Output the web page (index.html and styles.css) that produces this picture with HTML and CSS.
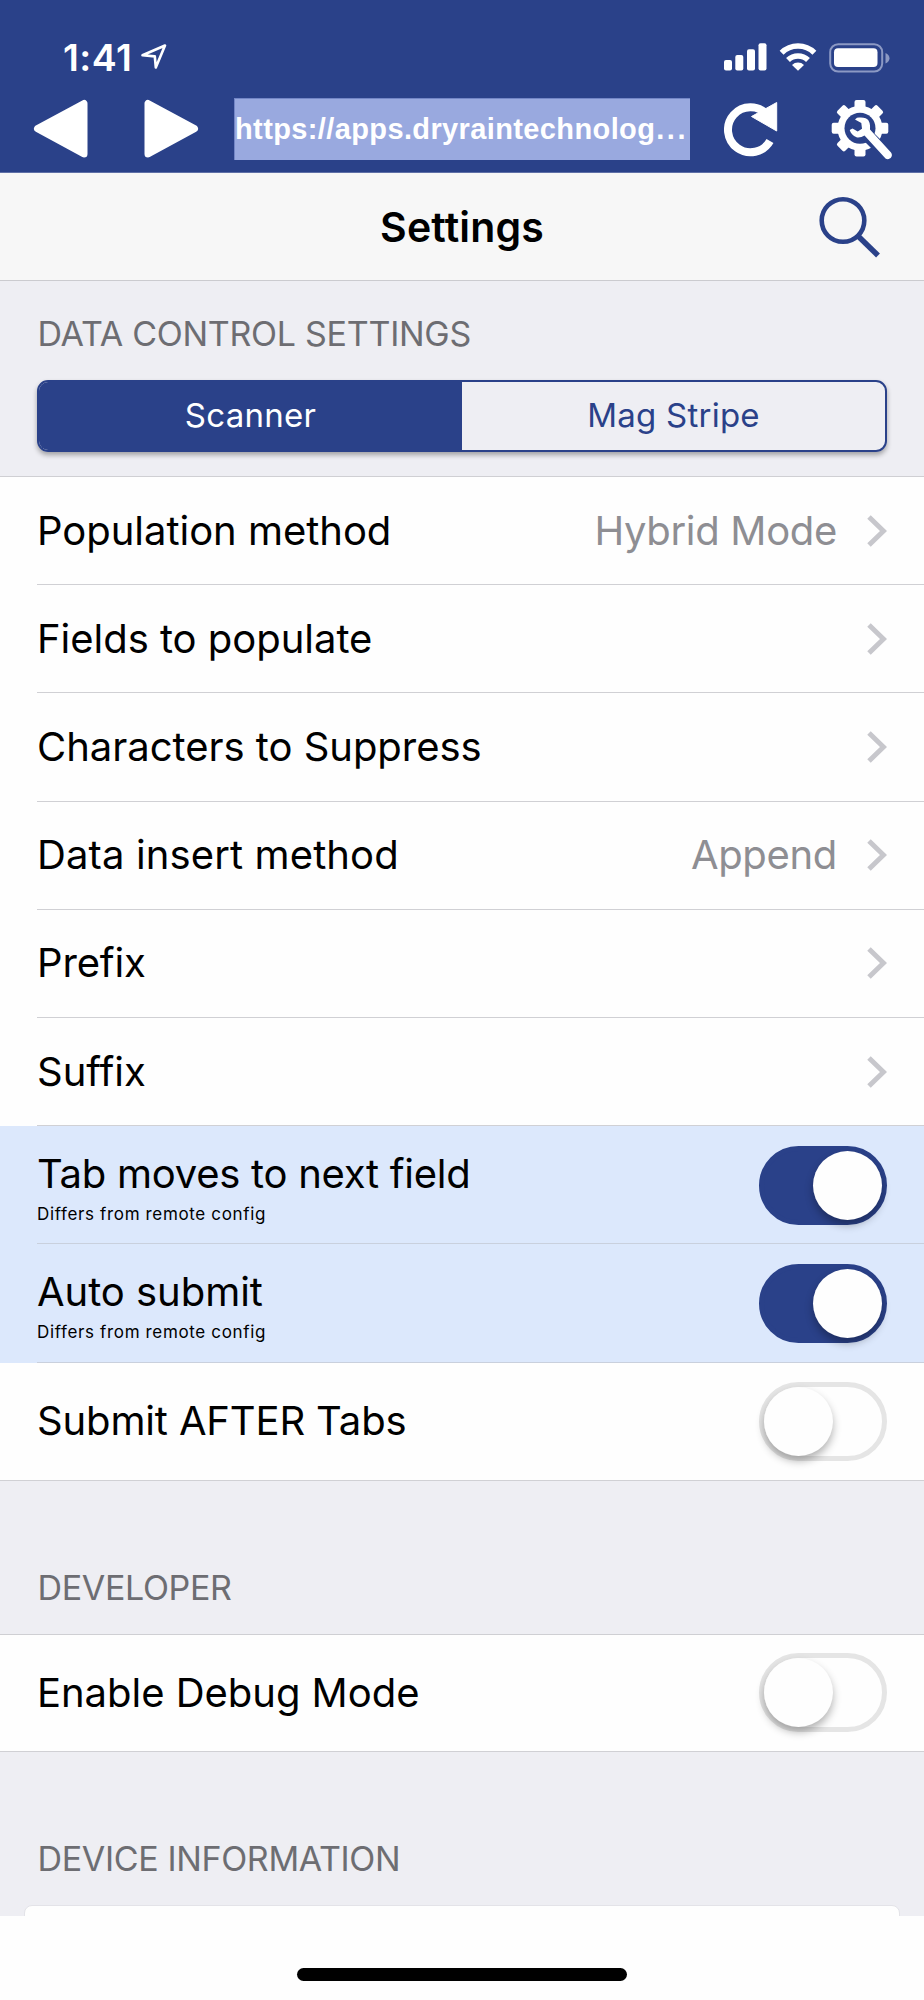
FILE: index.html
```html
<!DOCTYPE html>
<html lang="en">
<head>
<meta charset="utf-8">
<title>Settings</title>
<link rel="stylesheet" href="styles.css">
</head>
<body>
<div class="phone">
  <header class="browser">
    <div class="status">
      <div class="clock"><span class="time">1:41</span>
        <svg class="loc" width="26" height="26" viewBox="0 0 26 26"><path d="M1.5 11.3 24 1.5 14.8 23.5 13.8 12.4Z"/></svg>
      </div>
      <div class="signals">
        <svg width="43" height="28" viewBox="0 0 43 28" fill="#fff"><rect x="0" y="17" width="8" height="10.5" rx="2"/><rect x="11.3" y="12" width="8" height="15.5" rx="2"/><rect x="23" y="6.3" width="8" height="21.2" rx="2"/><rect x="34.5" y="0.3" width="8" height="27.2" rx="2"/></svg>
        <svg width="38" height="28" viewBox="0 0 38 28"><g fill="none" stroke="#fff" stroke-width="5.500"><path d="M2.6 9.8a23.2 23.2 0 0 1 32.8 0"/><path d="M9 17a14.3 14.3 0 0 1 20 0"/></g><path d="M19 27.8 13 22a8.5 8.5 0 0 1 12 0Z" fill="#fff"/></svg>
        <svg width="62" height="30" viewBox="0 0 62 30"><rect x="1.2" y="1.2" width="52" height="27.4" rx="8" fill="none" stroke="#8c99c4" stroke-width="2"/><rect x="5" y="5.3" width="43.500" height="18.8" rx="4" fill="#fff"/><path d="M56.5 10v10.500q4-2 4-5.250t-4-5.250Z" fill="#8c99c4"/></svg>
      </div>
    </div>
    <div class="toolbar">
      <svg class="tri" width="56" height="60" viewBox="0 0 56 60"><path d="M4.500 29.700 51 4.500v50.500Z"/></svg>
      <svg class="tri fwd" width="56" height="60" viewBox="0 0 56 60"><path d="M51.500 29.700 5 4.500v50.500Z"/></svg>
      <div class="url">https://apps.dryraintechnolog<span class="dots">...</span></div>
      <svg class="reload" width="56" height="56" viewBox="0 0 56 56"><path d="M43 13.500A22.500 22.500 0 1 0 46 40" fill="none" stroke="#fff" stroke-width="8"/><path d="M52.700 1.500v28.500L27.500 15.500Z" fill="#fff" stroke="#fff" stroke-linejoin="round"/></svg>
      <svg class="gear" width="64" height="64" viewBox="0 0 64 64">
        <g fill="#fff" transform="translate(29 29.300)"><rect x="-5.500" y="-28.300" width="11" height="56.600" rx="2"/><rect x="-5.500" y="-28.300" width="11" height="56.600" rx="2" transform="rotate(45)"/><rect x="-5.500" y="-28.300" width="11" height="56.600" rx="2" transform="rotate(90)"/><rect x="-5.500" y="-28.300" width="11" height="56.600" rx="2" transform="rotate(135)"/><circle r="22.500"/></g>
        <circle cx="29" cy="29.300" r="15.500" fill="#2a4189"/>
        <path d="M34 34 56 56" stroke="#2a4189" stroke-width="12.500" stroke-linecap="round"/>
        <path d="M24 20.500 26 18.800C31 18 36 18.500 37.500 21.500 39.500 25 39 28 39 30.500L60 53.500C63 57.500 58 62 54.500 59.500L33.500 36.500C31 38 28 38.800 25.500 38.200 22 37 19.500 34 18.700 31L21.500 29.500 26.700 32.500 31 29.800 30.300 24Z" fill="#fff"/>
      </svg>
    </div>
  </header>
  <div class="nav">
    <h1>Settings</h1>
    <svg class="search" width="62" height="62" viewBox="0 0 62 62"><circle cx="24" cy="24.500" r="21.300"/><path d="M38.500 39.500 59 59.500" stroke-width="5.500"/></svg>
  </div>
  <main>
    <section class="control">
      <h2>DATA CONTROL SETTINGS</h2>
      <div class="segmented"><span class="seg on">Scanner</span><span class="seg">Mag Stripe</span></div>
    </section>
    <div class="rows">
      <div class="row"><span class="label">Population method</span><span class="value">Hybrid Mode</span><svg class="chev" viewBox="0 0 20 32"><path d="M2 2 16.500 16 2 30"/></svg></div>
      <div class="row"><span class="label">Fields to populate</span><svg class="chev" viewBox="0 0 20 32"><path d="M2 2 16.500 16 2 30"/></svg></div>
      <div class="row"><span class="label">Characters to Suppress</span><svg class="chev" viewBox="0 0 20 32"><path d="M2 2 16.500 16 2 30"/></svg></div>
      <div class="row"><span class="label wide">Data insert method</span><span class="value">Append</span><svg class="chev" viewBox="0 0 20 32"><path d="M2 2 16.500 16 2 30"/></svg></div>
      <div class="row"><span class="label snug">Prefix</span><svg class="chev" viewBox="0 0 20 32"><path d="M2 2 16.500 16 2 30"/></svg></div>
      <div class="row"><span class="label">Suffix</span><svg class="chev" viewBox="0 0 20 32"><path d="M2 2 16.500 16 2 30"/></svg></div>
      <div class="row tall diff"><div class="stack"><span class="label tight">Tab moves to next field</span><small>Differs from remote config</small></div><i class="switch on"></i></div>
      <div class="row tall diff"><div class="stack"><span class="label">Auto submit</span><small>Differs from remote config</small></div><i class="switch on"></i></div>
      <div class="row tall last"><span class="label snug">Submit AFTER Tabs</span><i class="switch"></i></div>
    </div>
    <h2 class="group">DEVELOPER</h2>
    <div class="rows">
      <div class="row single last"><span class="label">Enable Debug Mode</span><i class="switch"></i></div>
    </div>
    <h2 class="group">DEVICE INFORMATION</h2>
    <div class="card"></div>
  </main>
  <footer><div class="home"></div></footer>
</div>
</body>
</html>
```
FILE: styles.css
```css
* { box-sizing: border-box; }
body { margin: 0; }
.phone {
  width: 924px; height: 2000px; overflow: hidden;
  display: flex; flex-direction: column;
  background: #fefefe; color: #000;
  font-family: Inter, "Liberation Sans", sans-serif;
}
svg { display: block; flex: none; }
.browser { height: 173px; flex: none; background: #2a4189; border-bottom: 1px solid #5f70a7; color: #fff; }
.status { height: 97px; padding: 41px 33px 0 63px; display: flex; justify-content: space-between; }
.clock { display: flex; align-items: flex-start; gap: 9px; }
.time { font-size: 37.500px; line-height: 33px; font-weight: 600; letter-spacing: 0.500px; }
.loc { margin-top: 3px; fill: none; stroke: #fff; stroke-width: 2.6; stroke-linejoin: round; }
.signals { display: flex; gap: 12px; margin-top: 2px; }
.toolbar { display: flex; align-items: flex-start; padding-left: 33px; }
.tri { fill: #fff; stroke: #fff; stroke-width: 7; stroke-linejoin: round; margin-top: 2px; }
.fwd { margin-left: 54px; }
.url {
  margin: 1px 0 0 35px; width: 456px; height: 62px; flex: none;
  background: #99a9df; border: 1px solid #7386c6; border-width: 1px 0 0 1px;
  font: bold 29px/60px "Liberation Sans", sans-serif; white-space: nowrap; letter-spacing: 0.380px;
}
.dots { letter-spacing: 2.500px; margin-left: 1px; }
.reload { margin: 4px 0 0 34px; }
.gear { margin: 2px 0 0 51px; }
.nav {
  height: 108px; flex: none; background: #f7f7f7; border-bottom: 1px solid #cbcbcf;
  display: grid; grid-template-columns: 1fr auto 1fr; align-items: center;
}
h1 { margin: 0; grid-column: 2; font-size: 41px; font-weight: 600; line-height: 50px; letter-spacing: 0.150px; }
.search { justify-self: end; margin-right: 43px; fill: none; stroke: #2a4189; stroke-width: 4.6; }
main { height: 1635px; flex: none; overflow: hidden; background: #eeeef3; }
h2 { margin: 0; font-size: 34px; font-weight: 400; line-height: 40px; color: #6d6d72; padding-left: 37.500px; letter-spacing: -0.270px; }
.control { height: 195px; padding-top: 33px; }
.segmented {
  display: flex; margin: 26px 37px 0; height: 72px; border: 2px solid #2a4189; border-radius: 11px;
  box-shadow: 0 3px 5px rgba(0,0,0,.32); overflow: hidden;
}
.seg { flex: 1; text-align: center; font-size: 33px; line-height: 67px; color: #2a4189; letter-spacing: 0.250px; }
.seg.on { background: #2a4189; color: #fff; }
.rows { background: #fefefe; border-top: 1px solid #cfcfd3; }
.row { height: 108.200px; display: flex; align-items: center; padding-right: 37px; margin-left: 37px; border-bottom: 1px solid #d0d0d4; }
.row.tall { height: 118.200px; }
.row.single { height: 117px; }
.row.diff {
  margin-left: 0; padding-left: 37px; border-bottom: 0;
  background: linear-gradient(#c9d0dd, #c9d0dd) 37px 100% / 100% 1px no-repeat #dce8fc;
}
.row.last { margin-left: 0; padding-left: 37px; }
.label { font-size: 40px; line-height: 50px; white-space: nowrap; letter-spacing: -0.030px; }
.label.wide { letter-spacing: 0.120px; }
.label.tight { letter-spacing: -0.270px; }
.label.snug { letter-spacing: -0.140px; }
.value { margin-left: auto; font-size: 40px; line-height: 50px; color: #8e8e93; letter-spacing: -0.320px; }
.chev { width: 20px; height: 32px; margin-left: 30px; fill: none; stroke: #c7c7cc; stroke-width: 5; }
.label + .chev { margin-left: auto; }
.stack { display: flex; flex-direction: column; padding-top: 4px; }
small { font-size: 17px; line-height: 22px; letter-spacing: 0.650px; margin-top: 4px; }
.switch {
  display: block; margin-left: auto; width: 128px; height: 79px; border-radius: 40px;
  border: 5px solid #e5e5e5; flex: none;
}
.switch::before {
  content: ""; display: block; width: 69px; height: 69px; border-radius: 50%;
  background: #fefefe; box-shadow: 0 5px 8px rgba(0,0,0,.3);
}
.switch.on { background: #2a4189; border-color: #2a4189; }
.switch.on::before { margin-left: 49px; }
.group { height: 153px; padding-top: 87px; letter-spacing: -0.350px; }
.card { height: 60px; margin: 0 24px; background: #fefefe; border: 1px solid #e3e3e8; border-radius: 8px; }
footer { flex: 1; display: flex; justify-content: center; padding-top: 52px; }
.home { width: 330px; height: 13px; border-radius: 7px; background: #000; }
```
